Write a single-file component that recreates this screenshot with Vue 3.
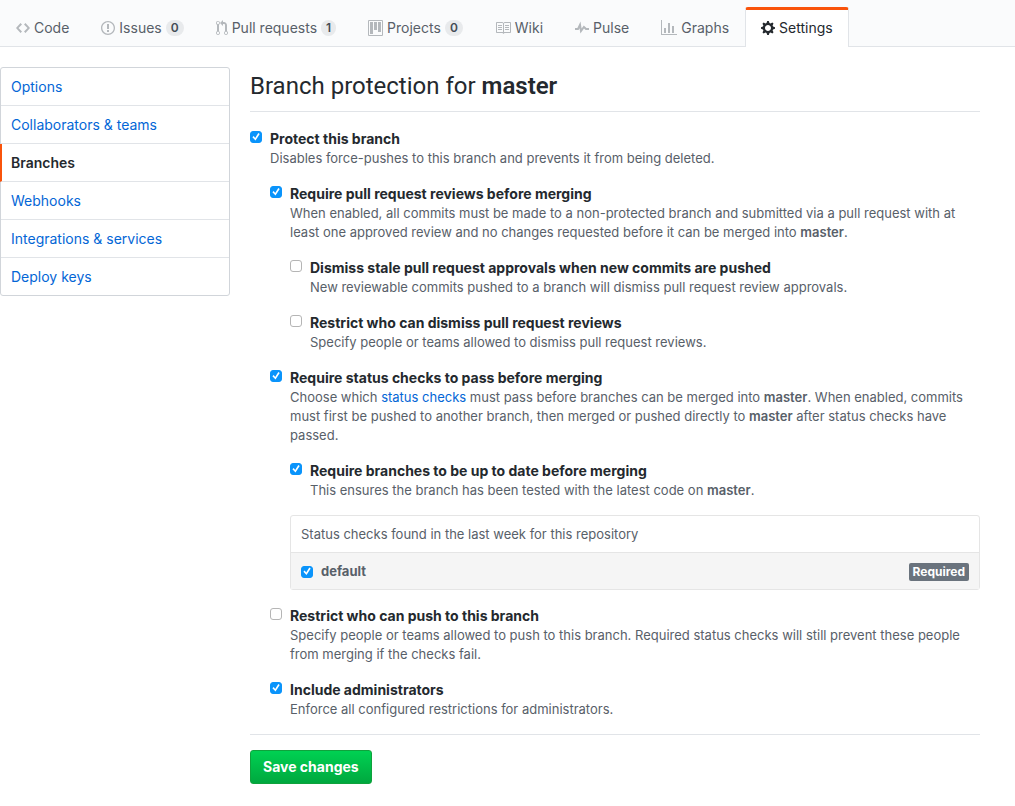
<script setup>
import { reactive } from 'vue'

const tabs = [
  { name: 'Code', w: 14, d: 'M9.5 3L8 4.5 11.5 8 8 11.5 9.5 13 14 8 9.5 3zm-5 0L0 8l4.5 5L6 11.5 2.5 8 6 4.5 4.5 3z' },
  { name: 'Issues', w: 14, count: 0, d: 'M7 2.3c3.14 0 5.7 2.56 5.7 5.7s-2.56 5.7-5.7 5.7A5.71 5.71 0 0 1 1.3 8c0-3.14 2.56-5.7 5.7-5.7zM7 1C3.14 1 0 4.14 0 8s3.14 7 7 7 7-3.14 7-7-3.14-7-7-7zm1 3H6v5h2V4zm0 6H6v2h2v-2z' },
  { name: 'Pull requests', w: 12, count: 1, d: 'M11 11.28V5c-.03-.78-.34-1.47-.94-2.06C9.46 2.35 8.78 2.03 8 2H7V0L4 3l3 3V4h1c.27.02.48.11.69.31.21.2.3.42.31.69v6.28A1.993 1.993 0 0 0 10 15a1.993 1.993 0 0 0 1-3.72zm-1 2.92c-.66 0-1.2-.55-1.2-1.2 0-.65.55-1.2 1.2-1.2.65 0 1.2.55 1.2 1.2 0 .65-.55 1.2-1.2 1.2zM4 3c0-1.11-.89-2-2-2a1.993 1.993 0 0 0-1 3.72v6.56A1.993 1.993 0 0 0 2 15a1.993 1.993 0 0 0 1-3.72V4.72c.59-.34 1-.98 1-1.72zm-.8 10c0 .66-.55 1.2-1.2 1.2-.65 0-1.2-.55-1.2-1.2 0-.65.55-1.2 1.2-1.2.65 0 1.2.55 1.2 1.2zM2 4.2C1.34 4.2.8 3.65.8 3c0-.65.55-1.2 1.2-1.2.65 0 1.2.55 1.2 1.2 0 .65-.55 1.2-1.2 1.2z' },
  { name: 'Projects', w: 15, count: 0, d: 'M10 12h3V2h-3v10zm-4-2h3V2H6v8zm-4 4h3V2H2v12zm-1 1h13V1H1v14zM14 0H1a1 1 0 0 0-1 1v14a1 1 0 0 0 1 1h13a1 1 0 0 0 1-1V1a1 1 0 0 0-1-1z' },
  { name: 'Wiki', w: 16, d: 'M3 5h4v1H3V5zm0 3h4V7H3v1zm0 2h4V9H3v1zm11-5h-4v1h4V5zm0 2h-4v1h4V7zm0 2h-4v1h4V9zm2-6v9c0 .55-.45 1-1 1H9.5l-1 1-1-1H2c-.55 0-1-.45-1-1V3c0-.55.45-1 1-1h5.5l1 1 1-1H15c.55 0 1 .45 1 1zm-8 .5L7.5 3H2v9h6V3.5zm7-.5H9.5l-.5.5V12h6V3z' },
  { name: 'Pulse', w: 14, d: 'M11.5 8L8.8 5.4 6.6 8.5 5.5 1.6 2.38 8H0v2h3.6l.9-1.8.9 5.4L9 8.5l1.6 1.5H14V8h-2.5z' },
  { name: 'Graphs', w: 16, d: 'M16 14v1H0V0h1v14h15zM5 13H3V8h2v5zm4 0H7V3h2v10zm4 0h-2V6h2v7z' },
  { name: 'Settings', w: 14, active: true, d: 'M14 8.77v-1.6l-1.94-.64-.45-1.09.88-1.84-1.13-1.13-1.81.91-1.09-.45-.69-1.92h-1.6l-.63 1.94-1.11.45-1.84-.88-1.13 1.13.91 1.81-.45 1.09L0 7.23v1.59l1.94.64.45 1.09-.88 1.84 1.13 1.13 1.81-.91 1.09.45.69 1.92h1.59l.63-1.94 1.11-.45 1.84.88 1.13-1.13-.92-1.81.47-1.09L14 8.75v.02zM7 11c-1.66 0-3-1.34-3-3s1.34-3 3-3 3 1.34 3 3-1.34 3-3 3z' },
]

const menu = ['Options', 'Collaborators & teams', 'Branches', 'Webhooks', 'Integrations & services', 'Deploy keys']

const form = reactive({
  protect: true,
  reviews: true,
  dismissStale: false,
  restrictDismiss: false,
  statusChecks: true,
  upToDate: true,
  defaultCheck: true,
  restrictPush: false,
  admins: true,
})
</script>

<template>
  <nav class="tabs" aria-label="Repository">
    <a v-for="t in tabs" :key="t.name" href="#" class="tab" :class="{ active: t.active }">
      <svg :width="t.w" height="16" :viewBox="`0 0 ${t.w} 16`" aria-hidden="true"><path fill-rule="evenodd" :d="t.d" /></svg>
      <span>{{ t.name }}</span>
      <span v-if="t.count !== undefined" class="counter">{{ t.count }}</span>
    </a>
  </nav>

  <div class="page">
    <nav class="menu" aria-label="Settings">
      <a v-for="m in menu" :key="m" href="#" :class="{ selected: m === 'Branches' }">{{ m }}</a>
    </nav>

    <main class="content">
      <h1>Branch protection for <strong>master</strong></h1>
      <form class="form" @submit.prevent>
        <div class="option">
          <input id="protect" v-model="form.protect" type="checkbox" />
          <label for="protect">Protect this branch</label>
          <p>Disables force-pushes to this branch and prevents it from being deleted.</p>
        </div>

        <div class="group">
          <div class="option">
            <input id="reviews" v-model="form.reviews" type="checkbox" />
            <label for="reviews">Require pull request reviews before merging</label>
            <p>When enabled, all commits must be made to a non-protected branch and submitted via a pull request with at least one approved review and no changes requested before it can be merged into <strong>master</strong>.</p>
          </div>

          <div class="group">
            <div class="option">
              <input id="stale" v-model="form.dismissStale" type="checkbox" />
              <label for="stale">Dismiss stale pull request approvals when new commits are pushed</label>
              <p>New reviewable commits pushed to a branch will dismiss pull request review approvals.</p>
            </div>
            <div class="option">
              <input id="dismiss" v-model="form.restrictDismiss" type="checkbox" />
              <label for="dismiss">Restrict who can dismiss pull request reviews</label>
              <p>Specify people or teams allowed to dismiss pull request reviews.</p>
            </div>
          </div>

          <div class="option">
            <input id="status" v-model="form.statusChecks" type="checkbox" />
            <label for="status">Require status checks to pass before merging</label>
            <p>Choose which <a href="#">status checks</a> must pass before branches can be merged into <strong>master</strong>. When enabled, commits must first be pushed to another branch, then merged or pushed directly to <strong>master</strong> after status checks have passed.</p>
          </div>

          <div class="group">
            <div class="option">
              <input id="uptodate" v-model="form.upToDate" type="checkbox" />
              <label for="uptodate">Require branches to be up to date before merging</label>
              <p>This ensures the branch has been tested with the latest code on <strong>master</strong>.</p>
            </div>
            <div class="checks">
              <div class="checks-head">Status checks found in the last week for this repository</div>
              <div class="checks-row">
                <input id="default" v-model="form.defaultCheck" type="checkbox" />
                <label for="default">default</label>
                <span class="badge">Required</span>
              </div>
            </div>
          </div>

          <div class="option">
            <input id="push" v-model="form.restrictPush" type="checkbox" />
            <label for="push">Restrict who can push to this branch</label>
            <p>Specify people or teams allowed to push to this branch. Required status checks will still prevent these people from merging if the checks fail.</p>
          </div>
          <div class="option">
            <input id="admins" v-model="form.admins" type="checkbox" />
            <label for="admins">Include administrators</label>
            <p>Enforce all configured restrictions for administrators.</p>
          </div>
        </div>

        <div class="actions">
          <button type="submit">Save changes</button>
        </div>
      </form>
    </main>
  </div>
</template>

<style>
body {
  margin: 0;
  background: #fff;
  color: #24292e;
  font: 14px/21px Inter, "Liberation Sans", sans-serif;
}
</style>

<style scoped>
* {
  box-sizing: border-box;
}
a {
  color: #0366d6;
  text-decoration: none;
}
strong {
  font-weight: 600;
}

.tabs {
  display: flex;
  height: 47px;
  padding-top: 7px;
  background: #fafbfc;
  border-bottom: 1px solid #e1e4e8;
}
.tab {
  display: flex;
  align-items: center;
  gap: 4px;
  height: 40px;
  padding: 0 15px 1px;
  border: 1px solid transparent;
  border-top: 3px solid transparent;
  border-bottom: 0;
  border-radius: 3px 3px 0 0;
  color: #586069;
  line-height: 20px;
  white-space: nowrap;
}
.tab svg {
  fill: #b4b8bc;
}
.tab.active {
  background: #fff;
  border-color: #f9530b #e1e4e8 transparent;
  color: #24292e;
}
.tab.active svg {
  fill: #24292e;
}
.counter {
  padding: 0 5px;
  border-radius: 20px;
  background: #e8eaec;
  color: #444d56;
  font-size: 12px;
  font-weight: 600;
  line-height: 16px;
}

.page {
  display: flex;
  align-items: flex-start;
  gap: 20px;
  max-width: 980px;
  padding-top: 20px;
}
.menu {
  flex: 0 0 230px;
  border: 1px solid #d1d5da;
  border-radius: 3px;
}
.menu a {
  display: block;
  padding: 8px 10px;
  border-bottom: 1px solid #e1e4e8;
}
.menu a:last-child {
  border-bottom: 0;
}
.menu .selected {
  margin-left: -1px;
  padding-left: 9px;
  border-left: 2px solid #f9530b;
  color: #24292e;
  font-weight: 600;
}

.content {
  flex: 1;
  min-width: 0;
}
h1 {
  margin: 0;
  padding-bottom: 5px;
  border-bottom: 1px solid #e1e4e8;
  font-family: Roboto, Inter, sans-serif;
  font-size: 24px;
  font-weight: 400;
  line-height: 39px;
}
.form {
  display: flex;
  flex-direction: column;
  gap: 15px;
  padding-top: 16px;
}
.group {
  display: flex;
  flex-direction: column;
  gap: 15px;
  padding-left: 20px;
}
.option {
  display: grid;
  grid-template-columns: 12px 1fr;
  column-gap: 8px;
}
.option input {
  margin-top: 3px;
}
.option label {
  justify-self: start;
  font-weight: 700;
}
p {
  grid-column: 2;
  margin: 0;
  color: #586069;
  font-size: 13px;
  line-height: 19px;
}

input {
  appearance: none;
  display: grid;
  width: 12px;
  height: 12px;
  margin: 0;
  border: 1px solid #b5b5b5;
  border-radius: 3px;
  background: #fff;
}
input:checked {
  border-color: #0a94fb;
  background: #0a94fb;
}
input:checked::before {
  content: "";
  width: 10px;
  height: 10px;
  background: #fff;
  clip-path: polygon(14% 52%, 27% 41%, 42% 61%, 73% 11%, 87% 21%, 45% 85%);
}

.checks {
  border: 1px solid #e5e5e5;
  border-radius: 3px;
  color: #586069;
  font-size: 13px;
}
.checks-head {
  padding: 8px 10px 7px;
}
.checks-row {
  display: flex;
  align-items: center;
  gap: 8px;
  padding: 8px 10px 7px;
  border-top: 1px solid #e5e5e5;
  background: #f5f5f5;
}
.checks-row label {
  font-weight: 700;
}
.badge {
  margin-left: auto;
  padding: 0 4px;
  border-radius: 2px;
  background: #6a737d;
  color: #fff;
  font-size: 12px;
  font-weight: 700;
  line-height: 18px;
}

.actions {
  padding-top: 15px;
  border-top: 1px solid #e1e4e8;
}
button {
  height: 34px;
  padding: 0 12px;
  border: 1px solid #0fa23c;
  border-radius: 3px;
  background: linear-gradient(#00d152, #00a83f);
  color: #fff;
  font: 700 14px/20px Inter, "Liberation Sans", sans-serif;
}
</style>
